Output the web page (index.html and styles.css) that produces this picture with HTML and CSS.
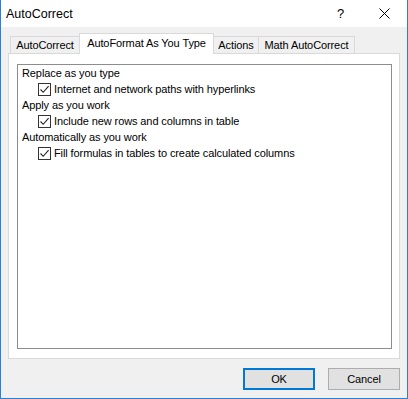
FILE: index.html
```html
<!DOCTYPE html>
<html>
<head>
<meta charset="utf-8">
<link rel="stylesheet" href="styles.css">
</head>
<body>
<div class="window">
  <div class="titlebar">
    <span class="title">AutoCorrect</span>
    <span class="help">?</span>
    <span class="close"><svg width="11" height="11" viewBox="0 0 11 11"><path d="M0.5 0.5 L10.5 10.5 M10.5 0.5 L0.5 10.5" stroke="#000" stroke-width="1" fill="none"/></svg></span>
  </div>
  <div class="body">
    <div class="tabs">
      <div class="tab t1">AutoCorrect</div>
      <div class="tab t2 active">AutoFormat As You Type</div>
      <div class="tab t3">Actions</div>
      <div class="tab t4">Math AutoCorrect</div>
    </div>
    <div class="panel">
      <div class="group">
        <div class="heading">Replace as you type</div>
        <div class="opt"><span class="cb"><svg width="11" height="11" viewBox="0 0 11 11"><path d="M1.5 5.5 L4.2 8.3 L9.6 2.2" stroke="#222" stroke-width="1.1" fill="none"/></svg></span>Internet and network paths with hyperlinks</div>
        <div class="heading">Apply as you work</div>
        <div class="opt"><span class="cb"><svg width="11" height="11" viewBox="0 0 11 11"><path d="M1.5 5.5 L4.2 8.3 L9.6 2.2" stroke="#222" stroke-width="1.1" fill="none"/></svg></span>Include new rows and columns in table</div>
        <div class="heading">Automatically as you work</div>
        <div class="opt"><span class="cb"><svg width="11" height="11" viewBox="0 0 11 11"><path d="M1.5 5.5 L4.2 8.3 L9.6 2.2" stroke="#222" stroke-width="1.1" fill="none"/></svg></span>Fill formulas in tables to create calculated columns</div>
      </div>
    </div>
    <div class="buttons">
      <div class="btn default">OK</div>
      <div class="btn">Cancel</div>
    </div>
  </div>
</div>
</body>
</html>
```
FILE: styles.css
```css
html, body {
  margin: 0;
  padding: 0;
}
body {
  width: 408px;
  height: 399px;
  font-family: "Liberation Sans", Arial, sans-serif;
  font-size: 11px;
  letter-spacing: -0.1px;
  color: #000;
}
.window {
  box-sizing: border-box;
  width: 408px;
  height: 399px;
  border: 1px solid #2b7fd4;
  border-top: none;
  display: flex;
  flex-direction: column;
  background: #f0f0f0;
}
.titlebar {
  height: 27px;
  background: #fff;
  display: flex;
  align-items: center;
  padding-left: 5px;
  flex-shrink: 0;
}
.title {
  font-size: 12.5px;
  letter-spacing: 0;
  flex: 1;
}
.help {
  width: 8px;
  margin-right: 34px;
  font-size: 13px;
}
.close {
  width: 11px;
  height: 11px;
  margin-right: 17px;
  display: flex;
}
.body {
  flex: 1;
  padding: 6px 7px 0 7px;
  display: flex;
  flex-direction: column;
}
.tabs {
  display: flex;
  align-items: flex-end;
  height: 20px;
  padding-left: 2px;
  position: relative;
  z-index: 1;
  white-space: nowrap;
}
.tab {
  box-sizing: border-box;
  height: 17px;
  line-height: 16px;
  text-align: center;
  border: 1px solid #d9d9d9;
  border-bottom: none;
  border-left: none;
  background: #f0f0f0;
}
.t1 {
  width: 70px;
  border-left: 1px solid #d9d9d9;
}
.t2 {
  width: 135px;
  margin-left: -1px;
}
.t3 {
  width: 45px;
}
.t4 {
  width: 96px;
}
.tab.active {
  height: 21px;
  line-height: 18px;
  margin-bottom: -1px;
  background: #fff;
  border-left: 1px solid #d9d9d9;
}
.panel {
  box-sizing: border-box;
  height: 306px;
  background: #fff;
  border: 1px solid #d9d9d9;
  padding: 10px 7px 9px 8px;
  display: flex;
}
.group {
  flex: 1;
  border: 1px solid #8d8d8d;
  padding: 0 4px;
}
.heading {
  height: 16px;
  line-height: 16px;
}
.opt {
  height: 16px;
  line-height: 16px;
  padding-left: 16px;
  display: flex;
  align-items: center;
}
.cb {
  box-sizing: border-box;
  width: 13px;
  height: 13px;
  border: 1px solid #333;
  margin-right: 3px;
  display: flex;
  align-items: center;
  justify-content: center;
}
.buttons {
  display: flex;
  justify-content: flex-end;
  gap: 13px;
  padding-top: 9px;
}
.btn {
  box-sizing: border-box;
  width: 72px;
  height: 22px;
  line-height: 20px;
  text-align: center;
  background: #e1e1e1;
  border: 1px solid #adadad;
}
.btn.default {
  border: 2px solid #0078d7;
  line-height: 18px;
}
```
